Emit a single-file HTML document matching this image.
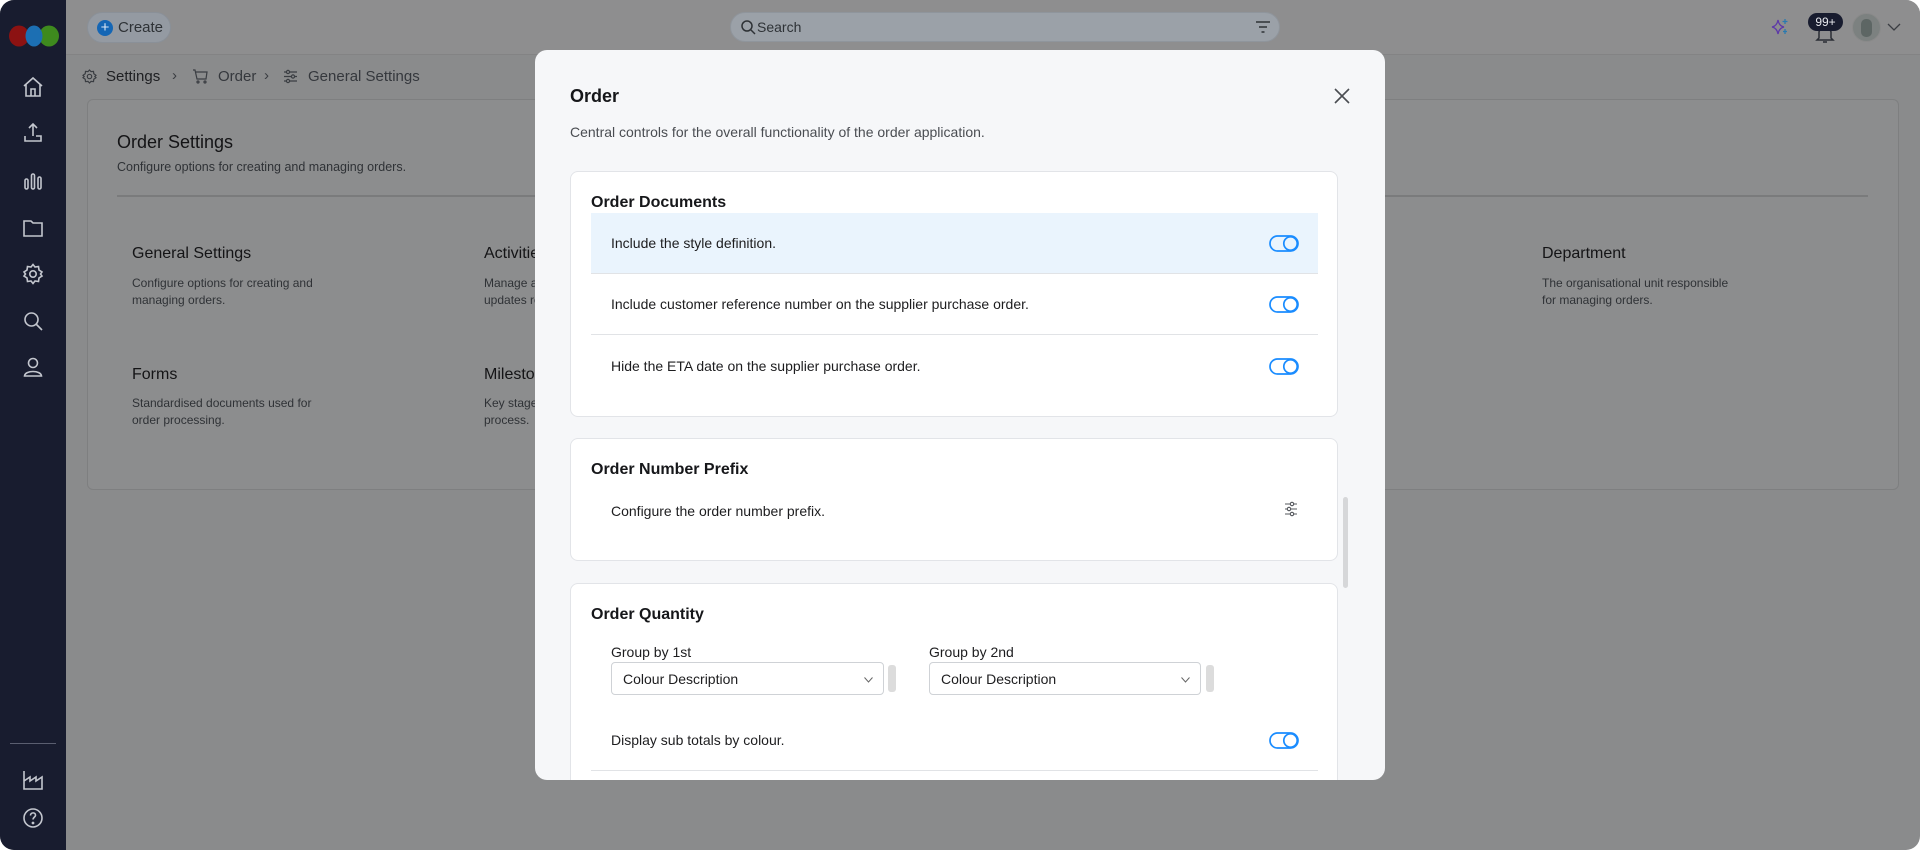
<!DOCTYPE html>
<html><head><meta charset="utf-8">
<style>
*{box-sizing:border-box;margin:0;padding:0}
html,body{width:1920px;height:850px;overflow:hidden;background:#fff;font-family:"Liberation Sans",Arial,sans-serif}
#app{position:absolute;left:0;top:0;width:1920px;height:850px;background:#8a8b8c;border-radius:14px;overflow:hidden}
.side{position:absolute;left:0;top:0;width:66px;height:850px;background:#181c2f}
.hdr{position:absolute;left:66px;top:0;right:0;height:55px;background:#8e8e8f;border-bottom:1px solid #838384}
.ico{position:absolute;left:21px}
.abs{position:absolute}
.t{position:absolute;white-space:nowrap}
.modal{position:absolute;left:535px;top:50px;width:850px;height:730px;background:#f6f7f9;border-radius:12px;overflow:hidden}
.card{position:absolute;left:35px;width:768px;background:#fff;border:1px solid #e2e4e8;border-radius:8px}
.row{position:absolute;left:20px;width:727px;height:61px;border-bottom:1px solid #e1e3e6}
.row span{position:absolute;left:20px;top:50%;transform:translateY(-50%);font-size:14px;color:#1d1d1f}
.tg{position:absolute;right:19px;top:50%;margin-top:-8px}
.sel{position:absolute;height:33px;border:1px solid #cfd2d6;border-radius:4px;background:#fff;font-size:14px;color:#1d1d1f;padding:8px 0 0 11px}
.hd{position:absolute;width:8px;height:27px;background:#dcdcdc;border-radius:3px}
</style></head><body>
<div id="app">
 <div class="side">
  <svg class="abs" style="left:5px;top:25px" width="56" height="22"><ellipse cx="14" cy="11" rx="10" ry="10.5" fill="#8c1212"/><ellipse cx="44" cy="11" rx="10" ry="10.5" fill="#3e8a1e"/><ellipse cx="29" cy="11" rx="8.5" ry="10.5" fill="#1c6fb3"/></svg>
  <svg class="ico" style="top:75px" width="24" height="24" fill="none" stroke="#c3c6ce" stroke-width="1.6"><path d="M3 11 L12 3 L21 11 M5 9 V21 H19 V9 M10 21 V14 H14 V21"/></svg>
  <svg class="ico" style="top:121px" width="24" height="24" fill="none" stroke="#c3c6ce" stroke-width="1.6"><path d="M12 15 V3 M8 7 L12 3 L16 7 M4 15 V20 H20 V15 H15"/></svg>
  <svg class="ico" style="top:169px" width="24" height="24" fill="none" stroke="#c3c6ce" stroke-width="1.6"><rect x="4" y="10" width="3" height="10" rx="1.5"/><rect x="10.5" y="5" width="3" height="15" rx="1.5"/><rect x="17" y="8" width="3" height="12" rx="1.5"/></svg>
  <svg class="ico" style="top:216px" width="24" height="24" fill="none" stroke="#c3c6ce" stroke-width="1.6"><path d="M3 5 H10 L12 7 H21 V20 H3 Z"/></svg>
  <svg class="ico" style="top:262px" width="24" height="24" fill="none" stroke="#c3c6ce" stroke-width="1.6"><circle cx="12" cy="12" r="3.2"/><path d="M12 2.5 L14 5 L17.5 4.5 L18 8 L21 10 L19.5 12 L21 14 L18 16 L17.5 19.5 L14 19 L12 21.5 L10 19 L6.5 19.5 L6 16 L3 14 L4.5 12 L3 10 L6 8 L6.5 4.5 L10 5 Z"/></svg>
  <svg class="ico" style="top:309px" width="24" height="24" fill="none" stroke="#c3c6ce" stroke-width="1.6"><circle cx="10.5" cy="10.5" r="6.5"/><path d="M15.5 15.5 L21 21"/></svg>
  <svg class="ico" style="top:355px" width="24" height="24" fill="none" stroke="#c3c6ce" stroke-width="1.6"><circle cx="12" cy="8" r="4.5"/><path d="M3.5 21 C4 15 20 15 20.5 21 Z"/></svg>
  <div class="abs" style="left:10px;top:743px;width:46px;height:1px;background:#5a5e70"></div>
  <svg class="ico" style="top:768px" width="24" height="24" fill="none" stroke="#c3c6ce" stroke-width="1.6"><path d="M3 3 V21 H21 V9 L15 13 V9 L9 13 V9 L3 13"/></svg>
  <svg class="ico" style="top:806px" width="24" height="24" fill="none" stroke="#c3c6ce" stroke-width="1.6"><circle cx="12" cy="12" r="9"/><path d="M9.5 9.5 C9.5 6 15 6 14.5 9.5 C14.3 11 12 11.5 12 13.5"/><circle cx="12" cy="17" r="0.6" fill="#c3c6ce"/></svg>
 </div>
 <div class="hdr">
  <div class="abs" style="left:21px;top:12px;width:84px;height:31px;border-radius:16px;background:#949aa2;border:1px solid #8a9098"></div>
  <div class="abs" style="left:31px;top:20px;width:16px;height:16px;border-radius:50%;background:#1466b5;color:#dbe6f3;font-size:15px;line-height:15px;text-align:center">+</div>
  <div class="t" style="left:52px;top:19px;font-size:15px;color:#2e3236">Create</div>
  <div class="abs" style="left:664px;top:12px;width:550px;height:30px;border-radius:15px;background:#9ba1a8;border:1px solid #8f959c"></div>
  <svg class="abs" style="left:674px;top:19px" width="16" height="16" fill="none" stroke="#2e3236" stroke-width="1.5"><circle cx="7" cy="7" r="5"/><path d="M11 11 L15 15"/></svg>
  <div class="t" style="left:691px;top:19px;font-size:14px;color:#2e3236">Search</div>
  <svg class="abs" style="left:1189px;top:20px" width="16" height="14" fill="none" stroke="#2e3236" stroke-width="1.4"><path d="M1 2 H15 M4 7 H12 M6.5 12 H9.5"/></svg>
  <svg class="abs" style="left:1704px;top:17px" width="20" height="20" fill="none" stroke="#5e3aa8" stroke-width="1.3"><path d="M8 3 Q9 9 14 10 Q9 11 8 17 Q7 11 2 10 Q7 9 8 3 Z"/><path d="M15 2 V7 M12.5 4.5 H17.5 M15 12 V17 M13 14.5 H17" stroke="#2a7ab0"/></svg>
  <svg class="abs" style="left:1748px;top:24px" width="22" height="20" fill="none" stroke="#2a2d35" stroke-width="1.5"><path d="M5 14 V8 C5 4 17 4 17 8 V14 L19 16 H3 Z M9 18 H13"/></svg>
  <div class="abs" style="left:1742px;top:13px;width:35px;height:18px;border-radius:9px;background:#181c2f;color:#e8e9ee;font-size:12px;text-align:center;line-height:18px">99+</div>
  <div class="abs" style="left:1786px;top:13px;width:29px;height:29px;border-radius:50%;background:#7c8180;border:1px solid #8a8a8a"><div style="margin:5px auto 0;width:11px;height:18px;border-radius:5px;background:#5d6664"></div></div>
  <svg class="abs" style="left:1821px;top:22px" width="14" height="10" fill="none" stroke="#3a3d42" stroke-width="1.3"><path d="M1 2 L7 8 L13 2"/></svg>
 </div>
 <svg class="abs" style="left:82px;top:69px" width="15" height="15" fill="none" stroke="#3a3d42" stroke-width="1.2"><circle cx="7.5" cy="7.5" r="2.2"/><path d="M7.5 1 L9 2.6 L11.5 2.4 L11.8 4.8 L14 6.3 L12.8 7.5 L14 8.7 L11.8 10.2 L11.5 12.6 L9 12.4 L7.5 14 L6 12.4 L3.5 12.6 L3.2 10.2 L1 8.7 L2.2 7.5 L1 6.3 L3.2 4.8 L3.5 2.4 L6 2.6 Z"/></svg>
 <div class="t" style="left:106px;top:68px;font-size:15px;color:#1e1f22">Settings</div>
 <div class="t" style="left:172px;top:67px;font-size:15px;color:#3a3d42">›</div>
 <svg class="abs" style="left:192px;top:69px" width="16" height="15" fill="none" stroke="#3a3d42" stroke-width="1.2"><path d="M1 1 H3 L5 10 H14 L15 3 H4"/><circle cx="6" cy="13" r="1"/><circle cx="13" cy="13" r="1"/></svg>
 <div class="t" style="left:218px;top:68px;font-size:15px;color:#35383d">Order</div>
 <div class="t" style="left:264px;top:67px;font-size:15px;color:#3a3d42">›</div>
 <svg class="abs" style="left:283px;top:69px" width="15" height="15" fill="none" stroke="#3a3d42" stroke-width="1.2"><path d="M1 3 H14 M1 7.5 H14 M1 12 H14"/><circle cx="5" cy="3" r="1.6" fill="#8a8b8c"/><circle cx="10" cy="7.5" r="1.6" fill="#8a8b8c"/><circle cx="5" cy="12" r="1.6" fill="#8a8b8c"/></svg>
 <div class="t" style="left:308px;top:68px;font-size:15px;color:#35383d">General Settings</div>
 <div class="abs" style="left:87px;top:99px;width:1812px;height:391px;border:1px solid #7e7f80;border-radius:6px;background:#8c8d8e"></div>
 <div class="t" style="left:117px;top:132px;font-size:18px;color:#141416">Order Settings</div>
 <div class="t" style="left:117px;top:160px;font-size:12.5px;color:#2f3236">Configure options for creating and managing orders.</div>
 <div class="abs" style="left:117px;top:195px;width:1751px;height:2px;background:#7a7b7c"></div>
 <div class="t" style="left:132px;top:245px;font-size:16px;color:#141416">General Settings</div>
 <div class="t" style="left:132px;top:275px;font-size:12px;line-height:16.5px;color:#2f3236">Configure options for creating and<br>managing orders.</div>
 <div class="t" style="left:484px;top:245px;font-size:16px;color:#141416">Activities</div>
 <div class="t" style="left:484px;top:275px;font-size:12px;line-height:16.5px;color:#2f3236">Manage activities and<br>updates related to orders.</div>
 <div class="t" style="left:1196px;top:275px;font-size:12px;line-height:16.5px;color:#2f3236">Define status options applicable to<br>each stage of order production.</div>
 <div class="t" style="left:1542px;top:245px;font-size:16px;color:#141416">Department</div>
 <div class="t" style="left:1542px;top:275px;font-size:12px;line-height:16.5px;color:#2f3236">The organisational unit responsible<br>for managing orders.</div>
 <div class="t" style="left:132px;top:366px;font-size:16px;color:#141416">Forms</div>
 <div class="t" style="left:132px;top:395px;font-size:12px;line-height:16.5px;color:#2f3236">Standardised documents used for<br>order processing.</div>
 <div class="t" style="left:484px;top:366px;font-size:16px;color:#141416">Milestones</div>
 <div class="t" style="left:484px;top:395px;font-size:12px;line-height:16.5px;color:#2f3236">Key stages in the order<br>process.</div>
 <div class="t" style="left:1220px;top:395px;font-size:12px;line-height:16.5px;color:#2f3236">Documents that are generated</div>

 <div class="modal">
  <div class="t" style="left:35px;top:36px;font-size:18px;font-weight:bold;color:#16171a">Order</div>
  <svg class="abs" style="left:799px;top:38px" width="16" height="16" fill="none" stroke="#4a4d52" stroke-width="1.6"><path d="M1 1 L15 15 M15 1 L1 15"/></svg>
  <div class="t" style="left:35px;top:74px;font-size:14px;color:#4a4d52">Central controls for the overall functionality of the order application.</div>

  <div class="card" style="top:121px;height:246px">
   <div class="t" style="left:20px;top:22px;font-size:16px;font-weight:bold;color:#16171a">Order Documents</div>
   <div class="row" style="top:41px;background:#eaf4fd"><span>Include the style definition.</span><svg class="tg" width="30" height="17" fill="none" stroke="#1a8cff" stroke-width="1.7"><rect x="1" y="1" width="28" height="15" rx="7.5"/><circle cx="21.5" cy="8.5" r="6.7"/></svg></div>
   <div class="row" style="top:102px"><span>Include customer reference number on the supplier purchase order.</span><svg class="tg" width="30" height="17" fill="none" stroke="#1a8cff" stroke-width="1.7"><rect x="1" y="1" width="28" height="15" rx="7.5"/><circle cx="21.5" cy="8.5" r="6.7"/></svg></div>
   <div class="row" style="top:163px;border-bottom:none"><span>Hide the ETA date on the supplier purchase order.</span><svg class="tg" width="30" height="17" fill="none" stroke="#1a8cff" stroke-width="1.7"><rect x="1" y="1" width="28" height="15" rx="7.5"/><circle cx="21.5" cy="8.5" r="6.7"/></svg></div>
  </div>

  <div class="card" style="top:388px;height:123px">
   <div class="t" style="left:20px;top:22px;font-size:16px;font-weight:bold;color:#16171a">Order Number Prefix</div>
   <div class="t" style="left:40px;top:64px;font-size:14px;color:#1d1d1f">Configure the order number prefix.</div>
   <svg class="abs" style="left:713px;top:62px" width="14" height="16" fill="none" stroke="#55585d" stroke-width="1.1"><path d="M1 3 H13 M1 8 H13 M1 13 H13"/><circle cx="8" cy="3" r="1.7" fill="#fff"/><circle cx="5" cy="8" r="1.7" fill="#fff"/><circle cx="8" cy="13" r="1.7" fill="#fff"/></svg>
  </div>
  <div class="abs" style="left:808px;top:447px;width:5px;height:91px;background:#d6d7d9;border-radius:3px"></div>

  <div class="card" style="top:533px;height:240px">
   <div class="t" style="left:20px;top:22px;font-size:16px;font-weight:bold;color:#16171a">Order Quantity</div>
   <div class="t" style="left:40px;top:60px;font-size:14px;color:#1d1d1f">Group by 1st</div>
   <div class="sel" style="left:40px;top:78px;width:273px">Colour Description<svg class="abs" style="left:252px;top:14px" width="9" height="6" fill="none" stroke="#666" stroke-width="1"><path d="M0.5 0.5 L4.5 5 L8.5 0.5"/></svg></div>
   <div class="hd" style="left:317px;top:81px"></div>
   <div class="t" style="left:358px;top:60px;font-size:14px;color:#1d1d1f">Group by 2nd</div>
   <div class="sel" style="left:358px;top:78px;width:272px">Colour Description<svg class="abs" style="left:251px;top:14px" width="9" height="6" fill="none" stroke="#666" stroke-width="1"><path d="M0.5 0.5 L4.5 5 L8.5 0.5"/></svg></div>
   <div class="hd" style="left:635px;top:81px"></div>
   <div class="row" style="top:126px"><span>Display sub totals by colour.</span><svg class="tg" width="30" height="17" fill="none" stroke="#1a8cff" stroke-width="1.7"><rect x="1" y="1" width="28" height="15" rx="7.5"/><circle cx="21.5" cy="8.5" r="6.7"/></svg></div>
  </div>
 </div>
</div>
</body></html>
